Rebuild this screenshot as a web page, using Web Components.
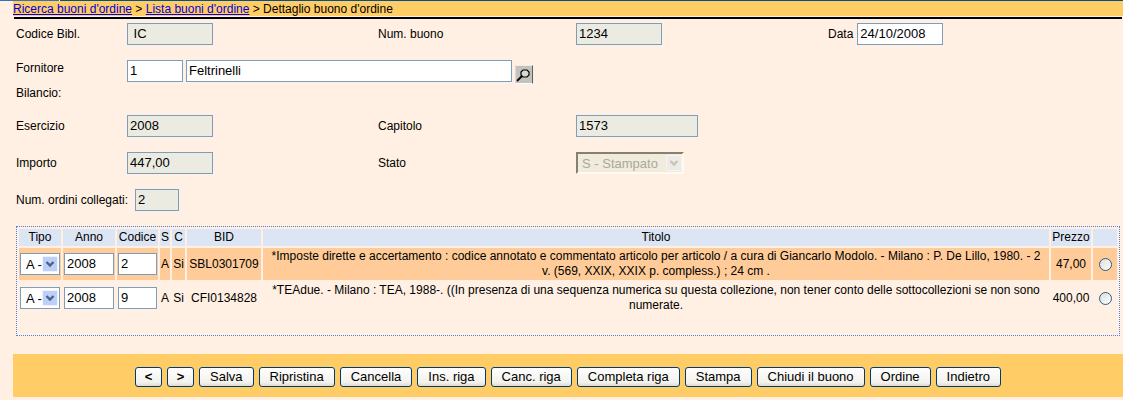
<!DOCTYPE html>
<html lang="it">
<head>
<meta charset="utf-8">
<title>Dettaglio buono d'ordine</title>
<style>
  body {
    margin: 0;
    background: #fff0e3;
    color: #000;
    font: 12px/15px "Liberation Sans", Arial, sans-serif;
    --input-border: #7b9ebd;
  }
</style>
</head>
<body>
<order-page></order-page>

<script>
const define = (name, html, setup) => {
  const template = document.createElement('template');
  template.innerHTML = html;
  customElements.define(name, class extends HTMLElement {
    constructor() {
      super();
      this.attachShadow({ mode: 'open' }).append(template.content.cloneNode(true));
    }
    connectedCallback() {
      if (setup) setup(this, this.shadowRoot);
    }
  });
};

/* Text box with its label; "inline" keeps both in one grid cell. */
define('form-field', `
  <style>
    :host { display: contents; }
    :host([inline]) { display: flex; gap: 4px; }
    label { line-height: 22px; white-space: nowrap; }
    :host([raised]) label { line-height: 16px; }
    .controls { display: flex; gap: 3px; min-width: 0; }
    :host([raised]) .controls { grid-column: 2 / -1; }
    input {
      box-sizing: border-box; width: 86px; height: 22px; margin: 0;
      padding: 0 2px 2px; border: 1px solid var(--input-border); border-radius: 0;
      background: #fff; color: #000; font: 13px "Liberation Sans", Arial, sans-serif;
    }
    input:read-only { background: #ebebe2; }
    :host([size="s"]) input { width: 44px; }
    :host([size="s"]) label { min-width: 115px; }
    :host([size="m"]) input { width: 56px; }
    :host([size="l"]) input { width: 122px; }
  </style>
  <label for="box"><slot></slot></label>
  <div class="controls"><input id="box" type="text"><slot name="extra"></slot></div>
`, (host, root) => {
  const box = root.querySelector('input');
  box.value = host.getAttribute('value');
  box.readOnly = host.hasAttribute('readonly');
});

define('supplier-search', `
  <style>
    :host { display: flex; gap: 3px; flex: 1; min-width: 0; }
    input {
      box-sizing: border-box; width: 326px; min-width: 0; height: 22px; margin: 0;
      padding: 0 2px 2px; border: 1px solid var(--input-border); border-radius: 0;
      background: #fff; color: #000; font: 13px "Liberation Sans", Arial, sans-serif;
    }
    button {
      box-sizing: border-box; width: 18px; height: 19px; margin: 5px 0 0; padding: 0; flex: none;
      border: 1px solid #fff; border-right-color: #606060; border-top-color: #f4ecd8;
      background: #c2c2bf; border-left-color: #dcdcd6;
    }
    svg { display: block; }
  </style>
  <input type="text" value="Feltrinelli" aria-label="Nome fornitore">
  <button type="button" aria-label="Cerca fornitore">
    <svg width="16" height="17" viewBox="0 0 16 17">
      <path d="M7 4h4l2 2v3l-2 2H7L5 9V6z" fill="#d8d8d4" stroke="#000" stroke-width="1.2"/>
      <path d="M6 10L1 15" stroke="#000" stroke-width="1.8"/>
    </svg>
  </button>
`);

/* Drop-down with a rounded arrow button laid over its right end. */
define('drop-down', `
  <style>
    :host { display: block; position: relative; width: 40px; height: 22px; --tile: #bdd0fa; --mark: #4d6185; }
    :host([disabled]) { width: 108px; --tile: #ecebe6; --mark: #c6c4b8; }
    select {
      appearance: none; box-sizing: border-box; display: block; width: 100%; height: 22px; margin: 0;
      padding: 0 0 0 5px; border: 1px solid var(--input-border); border-radius: 0;
      background: #fff; color: #000; font: 13px "Liberation Sans", Arial, sans-serif; opacity: 1;
    }
    select:disabled {
      border: 2px solid; border-color: #85806f #fffaf2 #fffaf2 #85806f;
      padding-left: 4px; background: #f0ebdc; color: #aca899;
    }
    svg { position: absolute; right: 2px; top: 3px; pointer-events: none; }
  </style>
  <select></select>
  <svg width="16" height="16" viewBox="0 0 16 16">
    <rect x=".5" y=".5" width="15" height="15" rx="1" fill="var(--tile)" stroke="#fff" stroke-opacity=".5"/>
    <path d="M4.500 6L8 9.500L11.500 6" fill="none" stroke="var(--mark)" stroke-width="2.400"/>
  </svg>
`, (host, root) => {
  const select = root.querySelector('select');
  select.add(new Option(host.getAttribute('value')));
  select.disabled = host.hasAttribute('disabled');
  select.setAttribute('aria-label', host.getAttribute('label'));
});

define('bread-crumb', `
  <style>
    :host { display: block; margin-left: 13px; }
    nav { height: 15px; line-height: 16px; background: #ffcc66; white-space: nowrap; }
    .rule { height: 2px; margin: 1px 1px 0; background: #000; }
    a { color: #0000e0; }
  </style>
  <nav aria-label="Percorso"><a href="#ricerca">Ricerca buoni d'ordine</a> &gt; <a href="#lista">Lista buoni d'ordine</a> &gt; Dettaglio buono d'ordine</nav>
  <div class="rule"></div>
`);

define('order-form', `
  <style>
    :host {
      display: grid; padding: 4px 0 0 16px; align-items: start;
      grid-template-columns: minmax(0, 111fr) minmax(0, 251fr) minmax(0, 198fr) minmax(0, 252fr) minmax(0, 295fr);
      grid-template-rows: 37px 26px 29px 37px 37px 37px;
    }
    .wide { grid-column: 1 / -1; }
    .state { line-height: 22px; }
  </style>
  <form-field readonly value=" IC">Codice Bibl.</form-field>
  <form-field readonly value="1234">Num. buono</form-field>
  <form-field inline value="24/10/2008">Data</form-field>
  <form-field raised size="m" value="1">Fornitore<supplier-search slot="extra"></supplier-search></form-field>
  <div class="wide">Bilancio:</div>
  <form-field readonly value="2008">Esercizio</form-field>
  <form-field readonly size="l" value="1573">Capitolo</form-field>
  <span></span>
  <form-field readonly value="447,00">Importo</form-field>
  <span class="state">Stato</span>
  <drop-down disabled label="Stato" value="S - Stampato"></drop-down>
  <form-field class="wide" inline readonly size="s" value="2">Num. ordini collegati:</form-field>
`);

define('order-lines', `
  <style>
    :host { display: block; box-sizing: border-box; min-height: 110px; margin: 0 3px 0 16px; border: 1px dotted #4a84e0; }
    table { width: 100%; table-layout: fixed; border-collapse: separate; border-spacing: 2px; text-align: center; }
    th { height: 17px; padding: 0; background: #dce5f3; font-weight: normal; line-height: 17px; white-space: nowrap; }
    td { height: 30px; padding: 1px 0; }
    td.title { padding: 1px 4px; vertical-align: top; }
    .current td { background: #ffcc99; }
    drop-down { margin: 0 auto; }
    input[type="text"] {
      display: block; box-sizing: border-box; width: calc(100% - 2px); height: 22px; margin: 0 auto;
      padding: 0 2px 2px; border: 1px solid var(--input-border); border-radius: 0;
      background: #fff; color: #000; font: 13px "Liberation Sans", Arial, sans-serif;
    }
    input[type="radio"] {
      appearance: none; display: block; box-sizing: border-box; width: 13px; height: 13px; margin: 0 auto;
      border: 1px solid #2d5c88; border-radius: 50%; background: linear-gradient(135deg, #dcdcd7, #fff);
    }
    input[type="radio"]:checked { background: radial-gradient(#2a8a2a 30%, #fff 40%); }
  </style>
  <table>
    <colgroup>
      <col style="width:42px"><col style="width:52px"><col style="width:41px"><col style="width:10px">
      <col style="width:13px"><col style="width:74px"><col><col style="width:40px"><col style="width:24px">
    </colgroup>
    <thead>
      <tr><th>Tipo</th><th>Anno</th><th>Codice</th><th>S</th><th>C</th><th>BID</th><th>Titolo</th><th>Prezzo</th><th></th></tr>
    </thead>
    <tbody>
      <tr class="current">
        <td><drop-down label="Tipo" value="A -"></drop-down></td>
        <td><input type="text" value="2008" aria-label="Anno"></td>
        <td><input type="text" value="2" aria-label="Codice"></td>
        <td>A</td><td>Si</td><td>SBL0301709</td>
        <td class="title">*Imposte dirette e accertamento : codice annotato e commentato articolo per articolo / a cura di Giancarlo Modolo. - Milano : P. De Lillo, 1980. - 2 v. (569, XXIX, XXIX p. compless.) ; 24 cm .</td>
        <td>47,00</td>
        <td><input type="radio" name="line" aria-label="Seleziona SBL0301709"></td>
      </tr>
      <tr>
        <td><drop-down label="Tipo" value="A -"></drop-down></td>
        <td><input type="text" value="2008" aria-label="Anno"></td>
        <td><input type="text" value="9" aria-label="Codice"></td>
        <td>A</td><td>Si</td><td>CFI0134828</td>
        <td class="title">*TEAdue. - Milano : TEA, 1988-. ((In presenza di una sequenza numerica su questa collezione, non tener conto delle sottocollezioni se non sono numerate.</td>
        <td>400,00</td>
        <td><input type="radio" name="line" aria-label="Seleziona CFI0134828"></td>
      </tr>
    </tbody>
  </table>
`);

define('action-button', `
  <style>
    :host { display: block; }
    button {
      display: block; box-sizing: border-box; height: 20px; padding: 0 10px;
      border: 1px solid #003c74; border-radius: 3px;
      background: linear-gradient(#fff, #f2f1ec 80%, #dedbd0);
      color: #000; font: 13px/18px "Liberation Sans", Arial, sans-serif; white-space: nowrap;
    }
    :host([arrow]) button { width: 27px; padding: 0; font-weight: bold; }
  </style>
  <button type="button"><slot></slot></button>
`);

define('action-bar', `
  <style>
    :host {
      display: flex; flex-wrap: wrap; justify-content: center; gap: 5px;
      margin: 18px 0 0 13px; padding: 13px 0 10px; background: #ffcc66;
    }
  </style>
  <slot></slot>
`);

define('order-page', `
  <style>
    :host { display: block; }
    .edge { height: 1px; background: linear-gradient(90deg, #2f75b5 59px, #fff 59px 60px, #00508c 60px); }
  </style>
  <div class="edge"></div>
  <bread-crumb></bread-crumb>
  <order-form></order-form>
  <order-lines></order-lines>
  <action-bar>
    <action-button arrow>&lt;</action-button>
    <action-button arrow>&gt;</action-button>
    <action-button>Salva</action-button>
    <action-button>Ripristina</action-button>
    <action-button>Cancella</action-button>
    <action-button>Ins. riga</action-button>
    <action-button>Canc. riga</action-button>
    <action-button>Completa riga</action-button>
    <action-button>Stampa</action-button>
    <action-button>Chiudi il buono</action-button>
    <action-button>Ordine</action-button>
    <action-button>Indietro</action-button>
  </action-bar>
`);
</script>
</body>
</html>
